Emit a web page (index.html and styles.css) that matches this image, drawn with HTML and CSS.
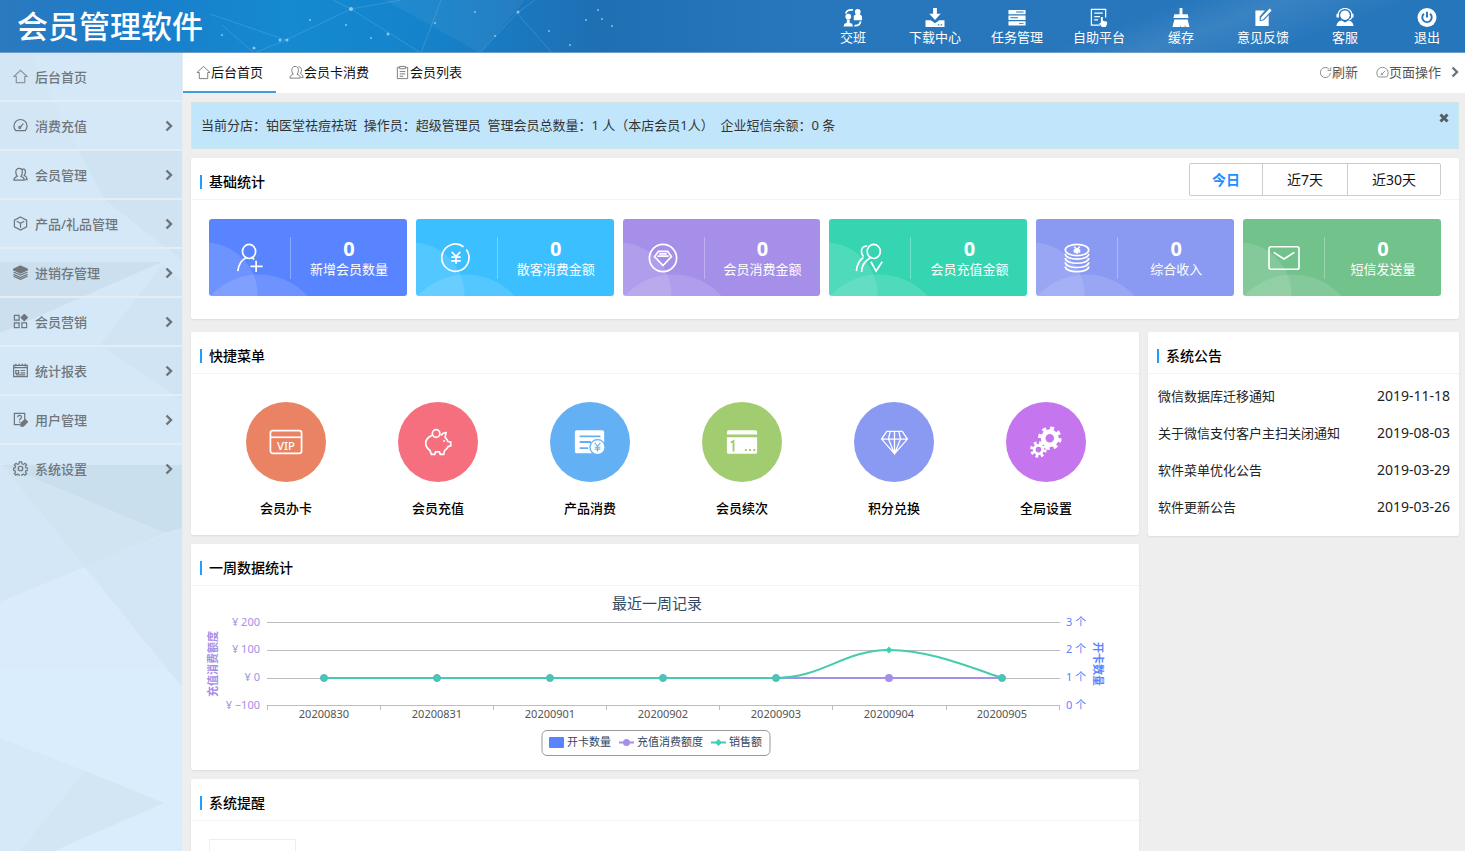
FILE: index.html
```html
<!DOCTYPE html>
<html lang="zh-CN">
<head>
    <meta charset="UTF-8">
    <meta name="viewport" content="width=device-width, initial-scale=1.0">
    <title>会员管理软件</title>
    <link rel="stylesheet" href="styles.css">
</head>
<body>
    <svg class="sprite" aria-hidden="true">
        <symbol id="i-home" viewBox="0 0 16 16"><path d="M1 8 8 1.5 15 8h-2.5v6.5h-9V8z"/></symbol>
        <symbol id="i-gauge" viewBox="0 0 16 16"><path d="M3 13.500a7 7 0 1 1 10 0zM8 9.500 11 6"/><circle cx="7.200" cy="10" r="1"/></symbol>
        <symbol id="i-users" viewBox="0 0 16 16"><path d="M1 14c0-3 2-3.500 3.500-4C3 8 3 6.500 3 5c0-2 1.300-3.500 3.500-3.500S10 3 10 5c0 1.500 0 3-1.500 5 1.500.5 3.500 1 3.500 4zM10 2c2 0 3.300 1.200 3.300 3 0 1.500-.3 2.700-1.300 4 1.500.8 3 1.500 3 4.500h-2"/></symbol>
        <symbol id="i-box" viewBox="0 0 16 16"><path d="m8 1 6.500 3.500v7L8 15l-6.500-3.500v-7zM4 5.500l4 2.300 4-2.300M8 8v4.500"/></symbol>
        <symbol id="i-layers" viewBox="0 0 16 16"><path class="fill" d="m8 1 8 3.800-8 3.700-8-3.700z"/><path d="m.5 7.500 7.500 3.300 7.500-3.300M.5 10l7.500 3.300L15.500 10M.5 12l7.500 3.300 7.500-3.300"/></symbol>
        <symbol id="i-grid" viewBox="0 0 16 16"><path d="M1.500 1.500h5v5h-5zM1.500 9.500h5v5h-5zM9.500 9.500h5v5h-5z"/><path class="fill" d="m12 .5 3.300 3.300L12 7.100 8.700 3.800z"/></symbol>
        <symbol id="i-report" viewBox="0 0 16 16"><path d="M.7 2.500h14.600v12H.7zM1 5h14M3 8h3v3H3zM8 8h5M8 10.500h5M3 12.700h10M3 .8v3M6.500.8v2M10 .8v2M13 .8v3"/></symbol>
        <symbol id="i-help" viewBox="0 0 16 16"><path d="M8 13.500H1.500v-12h11V8M5 5.500c0-2.500 4-2.500 4 0C9 7 7 7 7 9M7 10v1.500"/><path class="fill" d="m8.500 12 4.500-4 2.500 2.500L11 15H8.500z"/></symbol>
        <symbol id="i-gear" viewBox="0 0 16 16"><circle cx="8" cy="8" r="2.400"/><path d="M6.800 1h2.400l.4 2 1.500.6 1.700-1.200 1.700 1.700-1.200 1.700.6 1.500 2 .3v2.300l-2 .4-.6 1.500 1.200 1.700-1.700 1.700-1.700-1.200-1.500.6-.4 2H6.800l-.4-2-1.500-.6-1.700 1.200-1.700-1.700 1.200-1.700-.6-1.500-1.600-.4V7.600l1.600-.3.6-1.500-1.200-1.700 1.700-1.700 1.700 1.200L6.400 3z"/></symbol>
        <symbol id="i-clip" viewBox="0 0 16 16"><path d="M5 2.500H2.500v12h11v-12H11M5 1.500h6v2.500H5zM5 7h6M5 9.500h6M5 12h4"/></symbol>
        <symbol id="i-refresh" viewBox="0 0 16 16"><path d="M14 8.500A6.200 6.200 0 1 1 12.500 4M14.500 1.500v4h-4"/></symbol>
        <symbol id="i-arrow" viewBox="0 0 8 12"><path d="m1.500 1.500 4.500 4.500-4.500 4.500"/></symbol>
    </svg>

    <header class="topbar">
        <h1 class="logo">会员管理软件</h1>
        <nav class="top-menu">
            <a href="#">
                <svg viewBox="0 0 20 20"><circle cx="5" cy="9" r="3"/><path d="M0 19.500l1-3 2.500-1V12h3v3.500l2.500 1 1 3z"/><circle cx="15" cy="4" r="3"/><path d="M10.800 13V8.500L13.500 6h3L19.500 8.500V13z"/><path class="line" d="M2.500 6C3 2.500 6 1.500 10 2M18 14c-.5 3.500-3 4.800-6.500 4.500"/></svg>
                <span>交班</span>
            </a>
            <a href="#">
                <svg viewBox="0 0 20 20"><path d="M8 0h4v6h4l-6 6.500L4 6h4zM0 13h5.500l4.500 3 4.500-3H20v7H0z"/><path class="dark" d="M13 17h1.500v1.500H13zM16 17h1.500v1.500H16z"/></svg>
                <span>下载中心</span>
            </a>
            <a href="#">
                <svg viewBox="0 0 20 20"><path d="M1 2h18v4.500H1zM1 8h18v4.500H1zM1 14h18v4.500H1z"/><path class="dark" d="M9 3.700h8v1H9zM3 9.700h8v1H3zM12 15.700h5v1h-5z"/></svg>
                <span>任务管理</span>
            </a>
            <a href="#">
                <svg viewBox="0 0 20 20"><path class="line thin" d="M11 18H2V1.500h15V10M5 5.500h9M5 9h6M5 12.500h4"/><path d="M12 9.500h2v4l4.500 1V17l-1.500 3h-4l-2.800-4 1.800-.5z"/></svg>
                <span>自助平台</span>
            </a>
            <a href="#">
                <svg viewBox="0 0 20 20"><path d="M8.500 0h3v6.500H17l1 4H2l1-4h5.500zM3 12h14l2 8h-4l-1-2v2H9.500v-2l-.8 2H1z"/></svg>
                <span>缓存</span>
            </a>
            <a href="#">
                <svg viewBox="0 0 20 20"><path d="M2 2.500h10L6.500 9v5l4.500-1 5-5.500V19H2z"/><path d="m8 10 9-9.500 2 2-9 9.500-2.500.8z"/></svg>
                <span>意见反馈</span>
            </a>
            <a href="#">
                <svg viewBox="0 0 20 20"><circle cx="10" cy="7.500" r="5"/><path d="M1 19c.5-4 3-5.500 5.500-5.800l3.500 2 3.500-2C16 13.500 18.500 15 19 19z"/><path class="line thin" d="M2.800 9V7a7.200 6.500 0 0 1 14.400 0v2c0 2-1 3-3 3.500"/><path d="M1 6h2.500v4H1zM16.500 6H19v4h-2.500z"/></svg>
                <span>客服</span>
            </a>
            <a href="#">
                <svg viewBox="0 0 20 20"><circle cx="10" cy="10" r="10"/><path class="dark-line" d="M10 4v6M6.800 6a5 5 0 1 0 6.400 0"/></svg>
                <span>退出</span>
            </a>
        </nav>
    </header>

    <div class="layout">
        <aside class="sidebar">
            <a class="side-item light" href="#"><svg class="icon"><use href="#i-home"/></svg><span>后台首页</span></a>
            <a class="side-item" href="#"><svg class="icon"><use href="#i-gauge"/></svg><span>消费充值</span><svg class="arrow"><use href="#i-arrow"/></svg></a>
            <a class="side-item" href="#"><svg class="icon"><use href="#i-users"/></svg><span>会员管理</span><svg class="arrow"><use href="#i-arrow"/></svg></a>
            <a class="side-item" href="#"><svg class="icon"><use href="#i-box"/></svg><span>产品/礼品管理</span><svg class="arrow"><use href="#i-arrow"/></svg></a>
            <a class="side-item" href="#"><svg class="icon"><use href="#i-layers"/></svg><span>进销存管理</span><svg class="arrow"><use href="#i-arrow"/></svg></a>
            <a class="side-item" href="#"><svg class="icon"><use href="#i-grid"/></svg><span>会员营销</span><svg class="arrow"><use href="#i-arrow"/></svg></a>
            <a class="side-item" href="#"><svg class="icon"><use href="#i-report"/></svg><span>统计报表</span><svg class="arrow"><use href="#i-arrow"/></svg></a>
            <a class="side-item" href="#"><svg class="icon"><use href="#i-help"/></svg><span>用户管理</span><svg class="arrow"><use href="#i-arrow"/></svg></a>
            <a class="side-item last" href="#"><svg class="icon"><use href="#i-gear"/></svg><span>系统设置</span><svg class="arrow"><use href="#i-arrow"/></svg></a>
        </aside>

        <main class="main">
            <div class="tabs">
                <a class="tab active" href="#"><svg class="icon"><use href="#i-home"/></svg>后台首页</a>
                <a class="tab" href="#"><svg class="icon"><use href="#i-users"/></svg>会员卡消费</a>
                <a class="tab" href="#"><svg class="icon"><use href="#i-clip"/></svg>会员列表</a>
                <div class="tab-tools">
                    <button type="button"><svg class="icon"><use href="#i-refresh"/></svg>刷新</button>
                    <button type="button"><svg class="icon"><use href="#i-gauge"/></svg>页面操作<svg class="arrow"><use href="#i-arrow"/></svg></button>
                </div>
            </div>

            <div class="content">
                <div class="notice-bar">
                    <p>当前分店：铂医堂祛痘祛斑&nbsp; 操作员：超级管理员&nbsp; 管理会员总数量：1 人（本店会员1人）&nbsp; 企业短信余额：0 条</p>
                    <button class="close" type="button" aria-label="关闭"><svg viewBox="0 0 10 10"><path d="m1.500 1.500 7 7M8.500 1.500l-7 7"/></svg></button>
                </div>

                <section class="card">
                    <div class="card-head">
                        <h2>基础统计</h2>
                        <div class="period">
                            <button class="active" type="button">今日</button>
                            <button type="button">近7天</button>
                            <button type="button">近30天</button>
                        </div>
                    </div>
                    <div class="stats">
                        <div class="stat blue">
                            <div class="stat-icon"><svg viewBox="0 0 32 32"><ellipse cx="15" cy="9" rx="7" ry="7.500"/><path d="M3 30c1-8 4-12 8.500-14M18.500 16l2 1.500M22.500 19v12M16.500 25h13"/></svg></div>
                            <div class="stat-text"><strong>0</strong><span>新增会员数量</span></div>
                        </div>
                        <div class="stat sky">
                            <div class="stat-icon"><svg viewBox="0 0 32 32"><path d="M24 4A14.500 14.500 0 1 0 27 7"/><path d="m11.500 9.500 4.500 5 4.500-5M16 14.500v8M11 15h10M11 19h10"/></svg></div>
                            <div class="stat-text"><strong>0</strong><span>散客消费金额</span></div>
                        </div>
                        <div class="stat purple">
                            <div class="stat-icon"><svg viewBox="0 0 32 32"><circle cx="16" cy="16" r="14.500"/><path d="M11 9h10l4 5.500L16 24l-9-9.500zM10 14h12M12 11.500h8"/></svg></div>
                            <div class="stat-text"><strong>0</strong><span>会员消费金额</span></div>
                        </div>
                        <div class="stat green">
                            <div class="stat-icon"><svg viewBox="0 0 32 32"><ellipse cx="20" cy="9" rx="7" ry="7.500"/><path d="M13 3C8 3 6.500 7 7 10c.3 2 1 3 2 4.500M1.500 30C2 23 5 18 9 15.500M7 31c0-7 4-12 9-15M17 20l5.500 10L29 20"/></svg></div>
                            <div class="stat-text"><strong>0</strong><span>会员充值金额</span></div>
                        </div>
                        <div class="stat violet">
                            <div class="stat-icon"><svg viewBox="0 0 32 32"><ellipse cx="16" cy="7.500" rx="12.500" ry="6"/><path d="M3.500 11.500c0 7.500 25 7.500 25 0M3.500 16c0 7.500 25 7.500 25 0M3.500 20.500c0 7.500 25 7.500 25 0M3.500 25c0 7.500 25 7.500 25 0M13 4l3 3 3-3M16 7v4.500M12.500 7.500h7M12.500 9.500h7"/></svg></div>
                            <div class="stat-text"><strong>0</strong><span>综合收入</span></div>
                        </div>
                        <div class="stat leaf">
                            <div class="stat-icon"><svg viewBox="0 0 32 32"><rect x="0" y="4" width="32" height="24" rx="2"/><path d="m5 10 11 7 11-7"/></svg></div>
                            <div class="stat-text"><strong>0</strong><span>短信发送量</span></div>
                        </div>
                    </div>
                </section>

                <div class="columns">
                    <div class="col-main">
                        <section class="card">
                            <div class="card-head"><h2>快捷菜单</h2></div>
                            <div class="quick">
                                <a href="#">
                                    <span class="dot orange"><svg viewBox="0 0 36 36"><rect x="1.500" y="6" width="33" height="24" rx="2.500"/><path d="M2 13h32"/><text x="18" y="26" text-anchor="middle">VIP</text></svg></span>
                                    会员办卡
                                </a>
                                <a href="#">
                                    <span class="dot pink"><svg viewBox="0 0 36 36"><circle cx="16" cy="9" r="4"/><path d="M11.500 11C7 13 5 16 5 19.500c0 3.500 2 5.500 4.500 7.500l1.500 4h3.500l1-2.500h4l1 2.500H24l1-4c2-1.200 3-2.500 3.500-4l3-1v-4l-3-.5c-.5-2-1.500-3-3-4.500l1-5c-2.500 0-4 1-5.500 3"/><circle class="solid" cx="24.500" cy="17" r="1"/></svg></span>
                                    会员充值
                                </a>
                                <a href="#">
                                    <span class="dot azure"><svg viewBox="0 0 36 36"><path class="solid" d="M4 5.500h27a2 2 0 0 1 2 2V18l-7 12H4a2 2 0 0 1-2-2V7.500a2 2 0 0 1 2-2z"/><path class="cut" d="M7 12h22M7 18h12M7 24.500h9"/><circle class="solid ring" cx="26" cy="23.500" r="8"/><path class="cut thin" d="m23 19 3 3.500 3-3.500M26 22.500V28M23 23.500h6M23 25.500h6"/></svg></span>
                                    产品消费
                                </a>
                                <a href="#">
                                    <span class="dot lime"><svg viewBox="0 0 36 36"><path class="solid" d="M4 5.500h28a2 2 0 0 1 2 2V10H2V7.500a2 2 0 0 1 2-2zM2 13h32v15.500a2 2 0 0 1-2 2H4a2 2 0 0 1-2-2z"/><path class="cut" d="M6 18.500 9 17v11"/><path class="cut" d="M21 26.500h2M25.500 26.500h2M30 26.500h2"/></svg></span>
                                    会员续次
                                </a>
                                <a href="#">
                                    <span class="dot indigo"><svg viewBox="0 0 36 36"><path d="M9 5h18l6 9-15 17L3 14zM3 14h30M13 5l-2 9 7 17 7-17-2-9M18 5v26"/></svg></span>
                                    积分兑换
                                </a>
                                <a href="#">
                                    <span class="dot magenta"><svg viewBox="0 0 36 36"><circle class="body" cx="22" cy="14" r="7"/><circle class="teeth" cx="22" cy="14" r="10"/><circle class="body small" cx="10" cy="26" r="4.500"/><circle class="teeth small" cx="10" cy="26" r="6.800"/></svg></span>
                                    全局设置
                                </a>
                            </div>
                        </section>

                        <section class="card">
                            <div class="card-head"><h2>一周数据统计</h2></div>
                            <svg class="chart" viewBox="0 0 948 184" role="img" aria-label="最近一周记录">
                                <text class="chart-title" x="466" y="23">最近一周记录</text>
                                <path class="grid" d="M76 36.500h793M76 64.500h793M76 92.500h793"/>
                                <path class="axis" d="M76 119.500h793M76.500 119v5M189.500 119v5M302.500 119v5M415.500 119v5M528.500 119v5M641.500 119v5M755.500 119v5M868.500 119v5"/>
                                <g class="left-axis">
                                    <text x="69" y="40">¥ 200</text>
                                    <text x="69" y="67">¥ 100</text>
                                    <text x="69" y="95">¥ 0</text>
                                    <text x="69" y="123">¥ −100</text>
                                </g>
                                <g class="right-axis">
                                    <text x="875" y="40">3 个</text>
                                    <text x="875" y="67">2 个</text>
                                    <text x="875" y="95">1 个</text>
                                    <text x="875" y="123">0 个</text>
                                </g>
                                <text class="axis-name purple-text" transform="translate(26 78) rotate(-90)">充值消费额度</text>
                                <text class="axis-name blue-text" transform="translate(903 78) rotate(90)">开卡数量</text>
                                <g class="dates">
                                    <text x="133" y="132">20200830</text>
                                    <text x="246" y="132">20200831</text>
                                    <text x="359" y="132">20200901</text>
                                    <text x="472" y="132">20200902</text>
                                    <text x="585" y="132">20200903</text>
                                    <text x="698" y="132">20200904</text>
                                    <text x="811" y="132">20200905</text>
                                </g>
                                <path class="line-purple" d="M133 92h678"/>
                                <circle class="mark-purple" cx="698" cy="92" r="4"/>
                                <path class="line-green" d="M133 92h452c46 0 68-28 113-28 38 0 75 15 113 28"/>
                                <path class="mark-green" d="m698 60.500 3.500 3.500-3.500 3.500-3.500-3.500z"/>
                                <g class="mark-both">
                                    <circle cx="133" cy="92" r="3.500"/>
                                    <circle cx="246" cy="92" r="3.500"/>
                                    <circle cx="359" cy="92" r="3.500"/>
                                    <circle cx="472" cy="92" r="3.500"/>
                                    <circle cx="585" cy="92" r="3.500"/>
                                    <circle cx="811" cy="92" r="3.500"/>
                                </g>
                                <rect class="legend-box" x="351" y="144.500" width="228" height="25" rx="5"/>
                                <rect class="legend-blue" x="358" y="151" width="15" height="11" rx="1"/>
                                <path class="line-purple" d="M428 156.500h15"/>
                                <circle class="mark-purple" cx="435.500" cy="156.500" r="3.500"/>
                                <path class="line-green" d="M520 156.500h15"/>
                                <path class="mark-green" d="m527.500 153 3.500 3.500-3.500 3.500-3.500-3.500z"/>
                                <g class="legend-text">
                                    <text x="376" y="160">开卡数量</text>
                                    <text x="446" y="160">充值消费额度</text>
                                    <text x="538" y="160">销售额</text>
                                </g>
                            </svg>
                        </section>

                        <section class="card">
                            <div class="card-head"><h2>系统提醒</h2></div>
                            <div class="remind"><div class="remind-box"></div></div>
                        </section>
                    </div>

                    <section class="card col-side">
                        <div class="card-head"><h2>系统公告</h2></div>
                        <ul class="news">
                            <li><a href="#">微信数据库迁移通知</a><time>2019-11-18</time></li>
                            <li><a href="#">关于微信支付客户主扫关闭通知</a><time>2019-08-03</time></li>
                            <li><a href="#">软件菜单优化公告</a><time>2019-03-29</time></li>
                            <li><a href="#">软件更新公告</a><time>2019-03-26</time></li>
                        </ul>
                    </section>
                </div>
            </div>
        </main>
    </div>
</body>
</html>
```
FILE: styles.css
```css
* {
    box-sizing: border-box;
}
body {
    font-family: "Noto Sans", "Noto Sans CJK SC", sans-serif;
    font-size: 13px;
    line-height: 20px;
    margin: 0;
    height: 100vh;
    display: flex;
    flex-direction: column;
    overflow: hidden;
    color: #222;
    background-color: #eee;
}
a {
    color: inherit;
    text-decoration: none;
}
h1, h2, p, ul {
    margin: 0;
    padding: 0;
}
button {
    font: inherit;
    color: inherit;
    background: none;
    border: none;
    padding: 0;
    cursor: pointer;
}
svg {
    display: block;
    flex-shrink: 0;
}
.sprite {
    display: none;
}
.icon {
    width: 15px;
    height: 15px;
    fill: none;
    stroke: currentColor;
    stroke-width: 1;
}
.icon .fill, .fill {
    fill: currentColor;
}
.arrow {
    width: 8px;
    height: 12px;
    fill: none;
    stroke: #6d7479;
    stroke-width: 2.4;
}

/* 顶部 */
.topbar {
    flex-shrink: 0;
    height: 53px;
    display: flex;
    justify-content: space-between;
    padding-left: 17px;
    color: #fff;
    border-bottom: 1px solid #6c9cc6;
    background: url("data:image/svg+xml,%3Csvg xmlns='http://www.w3.org/2000/svg' width='840' height='53'%3E%3Cg fill='%23fff' fill-opacity='.05'%3E%3Cpath d='M385 0h140l-45 53zM440 0h80l-40 46z'/%3E%3C/g%3E%3Cg stroke='%23bfe4ff' stroke-opacity='.18' fill='none'%3E%3Cpath d='M351 9 286 40 210 14M351 9l70 44M351 9l50-9M286 40l-32 13-32-28M351 9l-18-9M421 53l20-53M480 53l37-40 35 40M517 13l18-13'/%3E%3C/g%3E%3Cg fill='%23d5f0ff' fill-opacity='.6'%3E%3Ccircle cx='351' cy='9' r='2'/%3E%3Ccircle cx='280' cy='40' r='1.500'/%3E%3Ccircle cx='287' cy='40' r='1.500'/%3E%3Ccircle cx='254' cy='48' r='1.500'/%3E%3Ccircle cx='388' cy='34' r='1.500'/%3E%3Ccircle cx='310' cy='20' r='1'/%3E%3Ccircle cx='346' cy='25' r='1'/%3E%3Ccircle cx='222' cy='35' r='1'/%3E%3Ccircle cx='371' cy='38' r='1'/%3E%3Ccircle cx='435' cy='23' r='1'/%3E%3Ccircle cx='518' cy='12' r='1.500'/%3E%3Ccircle cx='475' cy='12' r='1'/%3E%3Ccircle cx='549' cy='31' r='1'/%3E%3Ccircle cx='586' cy='20' r='1'/%3E%3Ccircle cx='602' cy='19' r='1'/%3E%3Ccircle cx='598' cy='10' r='1'/%3E%3Ccircle cx='612' cy='26' r='1'/%3E%3Ccircle cx='570' cy='45' r='1'/%3E%3Ccircle cx='495' cy='36' r='1'/%3E%3C/g%3E%3C/svg%3E") no-repeat,
        linear-gradient(160deg, transparent 74%, rgba(255, 255, 255, 0.09) 80%, transparent 88%),
        linear-gradient(90deg, #2b79bf 0, #1a7ecb 140px, #148ad1 290px, #1583cb 420px, #1f6fb4 600px, #2877bd 800px, #2676bc 100%);
}
.logo {
    font-size: 31px;
    line-height: 52px;
    font-weight: 500;
}
.top-menu {
    display: flex;
    gap: 6px;
}
.top-menu a {
    width: 76px;
    display: flex;
    flex-direction: column;
    align-items: center;
    padding-top: 8px;
}
.top-menu svg {
    width: 20px;
    height: 19px;
    fill: #fff;
}
.top-menu .line {
    fill: none;
    stroke: #fff;
    stroke-width: 1.8;
}
.top-menu .thin {
    stroke-width: 1.3;
}
.top-menu .dark {
    fill: #2676bc;
}
.top-menu .dark-line {
    fill: none;
    stroke: #2676bc;
    stroke-width: 2;
}

/* 左侧菜单 */
.layout {
    flex: 1;
    min-height: 0;
    display: flex;
}
.sidebar {
    width: 183px;
    flex-shrink: 0;
    border-right: 1px solid #e6eef5;
    background: #d5e8f7 url("data:image/svg+xml,%3Csvg xmlns='http://www.w3.org/2000/svg' width='182' height='798' viewBox='0 53 182 798'%3E%3Cpath fill='%23d2e6f5' d='M0 53h30l48 97H0z'/%3E%3Cpath fill='%23cfe3f3' d='M78 150h104v110L105 200z'/%3E%3Cpath fill='%23cbdfee' d='M0 262h162L0 333z'/%3E%3Cpath fill='%23d0e4f3' d='M163 264l19 18v118l-82-55z'/%3E%3Cpath fill='%23cadfee' d='M2 465h180v63l-17 5z'/%3E%3Cpath fill='%23d1e4f2' d='M2 465l163 68-80 34z'/%3E%3Cpath fill='%23d3e7f7' d='M0 465l85 102-85 35z'/%3E%3Cpath fill='%23daecfb' d='M85 567l82 102H0v-67z'/%3E%3Cpath fill='%23d2e6f5' d='M85 567l97-39v158z'/%3E%3Cpath fill='%23daedfc' d='M0 669h167l15 17v165H0z'/%3E%3Cpath fill='%23d5e9f8' d='M0 738l85 33-65 80H0z'/%3E%3Cpath fill='%23d2e6f4' d='M85 771l79 32-110 48H20z'/%3E%3C/svg%3E") no-repeat;
}
.side-item {
    height: 49px;
    display: flex;
    align-items: center;
    gap: 7px;
    padding: 0 9px 0 13px;
    border-bottom: 2px solid #e3edf5;
    color: #6f767c;
    font-weight: 500;
}
.side-item .icon {
    stroke-width: 1.3;
}
.side-item.last {
    border-bottom-color: transparent;
}
.side-item.light .icon {
    color: #8f969b;
}
.side-item .arrow {
    margin-left: auto;
}

/* 标签页 */
.main {
    flex: 1;
    min-width: 0;
    display: flex;
    flex-direction: column;
}
.tabs {
    flex-shrink: 0;
    display: flex;
    height: 40px;
    background-color: #fff;
    color: #111;
}
.tab {
    display: flex;
    align-items: center;
    padding: 0 13px;
    border-bottom: 2px solid transparent;
}
.tab.active {
    border-bottom-color: #3f9fdc;
}
.tab .icon, .tab-tools .icon {
    color: #777;
}
.tab-tools {
    margin-left: auto;
    display: flex;
    gap: 18px;
    padding: 0 6px 2px 0;
    color: #555;
}
.tab-tools button {
    display: flex;
    align-items: center;
}
.tab-tools .icon {
    width: 13px;
    height: 13px;
}
.tab-tools .arrow {
    margin-left: 10px;
}

/* 内容 */
.content {
    flex: 1;
    min-height: 0;
    overflow-y: auto;
    scrollbar-width: none;
    padding: 9px 6px 9px 8px;
}
.notice-bar {
    display: flex;
    justify-content: space-between;
    align-items: flex-start;
    padding: 10px 9px;
    height: 47px;
    margin-bottom: 9px;
    border: 1px solid #cfe6e6;
    background-color: #c1e6fb;
    color: #333;
}
.notice-bar p {
    padding-top: 2px;
}
.close svg {
    width: 10px;
    height: 10px;
    stroke: #555e64;
    stroke-width: 3;
}
.card {
    background-color: #fff;
    border-radius: 2px;
    box-shadow: 0 1px 2px rgba(0, 0, 0, 0.08);
}
.card-head {
    display: flex;
    justify-content: space-between;
    height: 42px;
    padding: 5px 18px 0 9px;
    border-bottom: 1px solid #f3f3f3;
}
.card-head h2 {
    display: flex;
    align-items: center;
    padding-top: 2px;
    font-size: 14px;
    font-weight: 500;
    color: #000;
}
.card-head h2::before {
    content: "";
    width: 2px;
    height: 14px;
    margin-right: 7px;
    background-color: #1e9fff;
}
.period {
    display: flex;
    height: 33px;
    border: 1px solid #ccc;
    border-radius: 2px;
    font-size: 14px;
    color: #111;
}
.period button {
    padding: 0 24px;
}
.period button + button {
    border-left: 1px solid #ccc;
}
.period .active {
    padding: 0 22px;
    color: #1e8fff;
    font-weight: 700;
}
.stats {
    display: grid;
    grid-template-columns: repeat(6, 1fr);
    gap: 9px;
    padding: 19px 18px 23px;
}
.stat {
    display: flex;
    align-items: center;
    height: 77px;
    border-radius: 3px;
    color: #fff;
    background-image: radial-gradient(circle at -4px 76px, rgba(255, 255, 255, 0.12) 52px, transparent 53px),
        radial-gradient(circle at 50px 121px, rgba(255, 255, 255, 0.12) 65px, transparent 66px);
}
.blue { background-color: #5984ff; }
.sky { background-color: #3bbfff; }
.purple { background-color: #a58fe8; }
.green { background-color: #36d5b2; }
.violet { background-color: #8a9af2; }
.leaf { background-color: #72c28b; }
.stat-icon {
    width: 82px;
    height: 42px;
    display: flex;
    align-items: center;
    justify-content: center;
    border-right: 1px solid rgba(255, 255, 255, 0.3);
}
.stat-icon svg {
    width: 30px;
    height: 30px;
    overflow: visible;
    fill: none;
    stroke: #fff;
    stroke-width: 1.8;
}
.stat-text {
    flex: 1;
    padding-top: 2px;
    text-align: center;
}
.stat-text strong {
    display: block;
    font-size: 20px;
}
.stat-text span {
    display: block;
}
.columns {
    display: grid;
    grid-template-columns: minmax(0, 1fr) 311px;
    gap: 9px;
    align-items: start;
    margin-top: 13px;
}
.col-main {
    display: flex;
    flex-direction: column;
    gap: 9px;
}

/* 快捷菜单 */
.quick {
    display: grid;
    grid-template-columns: repeat(6, 1fr);
    padding: 28px 17px 17px 19px;
}
.quick a {
    display: flex;
    flex-direction: column;
    align-items: center;
    gap: 16px;
    color: #000;
    font-weight: 500;
}
.dot {
    width: 80px;
    height: 80px;
    display: flex;
    align-items: center;
    justify-content: center;
    border-radius: 50%;
}
.dot svg {
    width: 34px;
    height: 34px;
    fill: none;
    stroke: #fff;
    stroke-width: 1.8;
}
.indigo svg {
    width: 31px;
    height: 31px;
    stroke-width: 1.5;
}
.dot text {
    font-size: 12px;
    fill: #fff;
    stroke: none;
}
.dot .solid {
    fill: #fff;
    stroke: none;
}
.dot .cut {
    stroke: #63b0f5;
    stroke-width: 2;
}
.dot .thin {
    stroke-width: 1.2;
}
.dot .ring {
    stroke: #63b0f5;
    stroke-width: 1.4;
}
.lime .cut {
    stroke: #a2cc70;
}
.dot .body {
    stroke-width: 5;
}
.dot .teeth {
    stroke-width: 5;
    stroke-dasharray: 3.93 3.93;
}
.dot .body.small {
    stroke-width: 3;
}
.dot .teeth.small {
    stroke-width: 4;
    stroke-dasharray: 2.67 2.67;
}
.orange { background-color: #e98363; }
.pink { background-color: #f66f7e; }
.azure { background-color: #63b0f5; }
.lime { background-color: #a2cc70; }
.indigo { background-color: #8a9af2; }
.magenta { background-color: #c576ee; }

/* 图表 */
.chart {
    width: 100%;
    height: auto;
    font-size: 11px;
}
.chart-title {
    font-size: 15px;
    fill: #33475f;
    text-anchor: middle;
}
.grid {
    stroke: #bbbbc0;
}
.axis {
    fill: none;
    stroke: #b4bfcd;
}
.left-axis {
    fill: #a58fe8;
    text-anchor: end;
}
.right-axis {
    fill: #5984ff;
}
.axis-name {
    font-weight: 700;
    text-anchor: middle;
}
.purple-text {
    fill: #a58fe8;
}
.blue-text {
    fill: #5984ff;
}
.dates {
    fill: #555;
    text-anchor: middle;
}
.line-purple, .line-green {
    fill: none;
    stroke: #a58fe8;
    stroke-width: 2;
}
.line-green {
    stroke: #45cbae;
}
.mark-purple {
    fill: #a58fe8;
}
.mark-green {
    fill: #36d5b2;
}
.mark-both {
    fill: #45c8b4;
    stroke: #5bb5bd;
}
.legend-box {
    fill: #fff;
    stroke: #999;
}
.legend-blue {
    fill: #5984ff;
}
.legend-text {
    fill: #33475f;
}

.remind {
    padding: 18px;
}
.remind-box {
    width: 87px;
    height: 87px;
    border: 1px solid #eee;
}

/* 系统公告 */
.news {
    list-style: none;
    padding: 3px 9px 11px 10px;
}
.news li {
    display: flex;
    justify-content: space-between;
    align-items: center;
    height: 37px;
    color: #222;
}
.news time {
    font-size: 14px;
}
```
